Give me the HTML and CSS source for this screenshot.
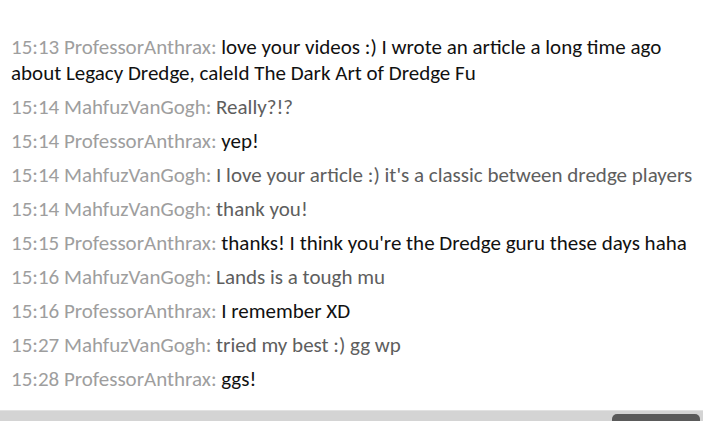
FILE: index.html
```html
<!DOCTYPE html>
<html lang="en">
<head>
    <meta charset="UTF-8">
    <title>Chat</title>
    <link rel="stylesheet" href="styles.css">
</head>
<body>
    <div class="chatLog">
        <div class="chatLog_line"><span class="chatLog_meta">15:13 ProfessorAnthrax:</span> <span class="chatLog_mine">love your videos :) I wrote an article a long time ago about Legacy Dredge, caleld The Dark Art of Dredge Fu</span></div>
        <div class="chatLog_line"><span class="chatLog_meta">15:14 MahfuzVanGogh:</span> <span class="chatLog_theirs">Really?!?</span></div>
        <div class="chatLog_line"><span class="chatLog_meta">15:14 ProfessorAnthrax:</span> <span class="chatLog_mine">yep!</span></div>
        <div class="chatLog_line"><span class="chatLog_meta">15:14 MahfuzVanGogh:</span> <span class="chatLog_theirs">I love your article :) it's a classic between dredge players</span></div>
        <div class="chatLog_line"><span class="chatLog_meta">15:14 MahfuzVanGogh:</span> <span class="chatLog_theirs">thank you!</span></div>
        <div class="chatLog_line"><span class="chatLog_meta">15:15 ProfessorAnthrax:</span> <span class="chatLog_mine">thanks! I think you're the Dredge guru these days haha</span></div>
        <div class="chatLog_line"><span class="chatLog_meta">15:16 MahfuzVanGogh:</span> <span class="chatLog_theirs">Lands is a tough mu</span></div>
        <div class="chatLog_line"><span class="chatLog_meta">15:16 ProfessorAnthrax:</span> <span class="chatLog_mine">I remember XD</span></div>
        <div class="chatLog_line"><span class="chatLog_meta">15:27 MahfuzVanGogh:</span> <span class="chatLog_theirs">tried my best :) gg wp</span></div>
        <div class="chatLog_line"><span class="chatLog_meta">15:28 ProfessorAnthrax:</span> <span class="chatLog_mine">ggs!</span></div>
    </div>
    <div class="chatBar">
        <div class="chatBar_button"></div>
    </div>
</body>
</html>
```

FILE: styles.css
```css
html, body{
    margin: 0;
    padding: 0;
    background: #ffffff;
    height: 100%;
    overflow: hidden;
}
body{
    display: flex;
    flex-direction: column;
    font-family: Carlito, Calibri, Lato, "Liberation Sans", sans-serif;
    font-size: 21px;
}
.chatLog{
    flex: 1;
    display: flex;
    flex-direction: column;
    gap: 8px;
    padding: 34px 0 0 11px;
    width: 684px;
}
.chatLog_line{
    line-height: 26px;
}
.chatLog_meta{
    color: #9e9e9e;
}
.chatLog_mine{
    color: #111111;
}
.chatLog_theirs{
    color: #5e5e5e;
}
.chatBar{
    height: 10px;
    background: #d4d4d4;
    border-top: 1px solid #e2e2e2;
    display: flex;
    justify-content: flex-end;
    align-items: flex-end;
    padding-right: 3px;
}
.chatBar_button{
    width: 88px;
    height: 7px;
    background: #5a5a5a;
    border-radius: 5px 5px 0 0;
}
```
